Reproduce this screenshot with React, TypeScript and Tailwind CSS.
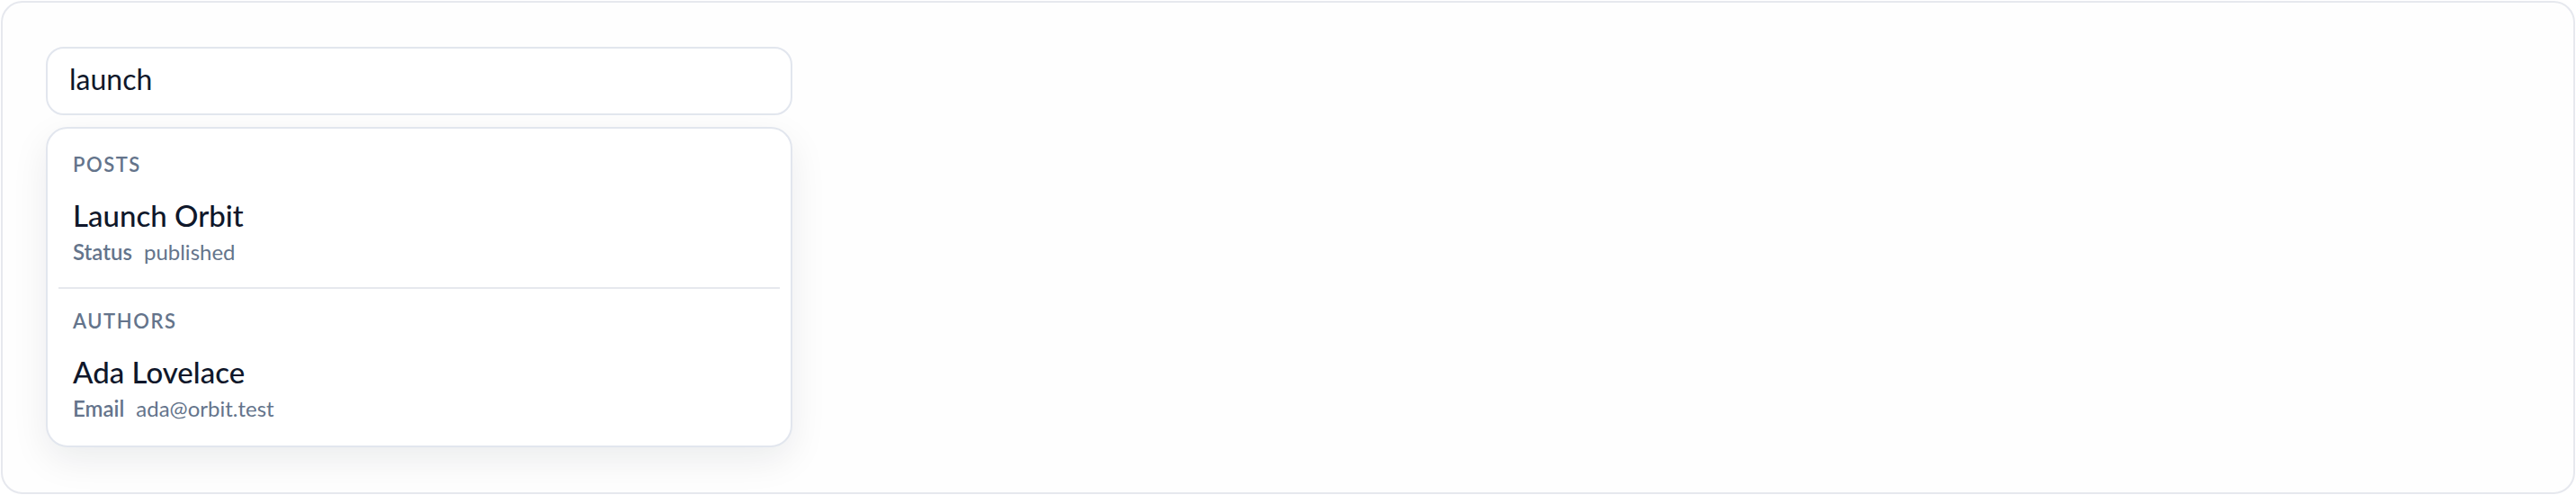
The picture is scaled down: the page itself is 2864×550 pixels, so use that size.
const font = { fontFamily: 'Lato, "Noto Sans", sans-serif' }

const groups = [
  { label: 'Posts', title: 'Launch Orbit', metaKey: 'Status', metaValue: 'published' },
  { label: 'Authors', title: 'Ada Lovelace', metaKey: 'Email', metaValue: 'ada@orbit.test' },
]

export default function App() {
  return (
    <div className="h-[550px] w-[2864px] bg-white p-px" style={font}>
      <div className="h-full rounded-[24px] border-2 border-[#e6e8ee] bg-[#fefefe] px-[48px] pt-[49px]">
        <div className="w-[830px]">
          <input
            readOnly
            value="launch"
            className="h-[76px] w-full rounded-[20px] border-2 border-[#e2e6ee] bg-white px-[24px] pb-[6px] text-[32px] text-[#0f172a] outline-none"
            style={font}
          />
          <div className="mt-[13px] rounded-[24px] border-2 border-[#e2e6ee] bg-white p-[12px] shadow-[0_14px_40px_rgba(15,23,42,0.08)]">
            {groups.map((g, i) => (
              <div
                key={g.label}
                className={
                  i === 0
                    ? 'px-[16px] pt-[12px] pb-[23px]'
                    : 'border-t-2 border-[#e6e8ee] px-[16px] pt-[20px] pb-[13px]'
                }
              >
                <p className="text-[22px] leading-[32px] font-semibold uppercase tracking-[0.07em] text-[#64748b]">
                  {g.label}
                </p>
                <p className="mt-[20px] text-[33px] leading-[40px] font-medium text-[#0f172a]">{g.title}</p>
                <p className="mt-[5px] flex gap-[13px] text-[24px] leading-[32px] text-[#64748b]">
                  <span className="font-semibold">{g.metaKey}</span>
                  <span>{g.metaValue}</span>
                </p>
              </div>
            ))}
          </div>
        </div>
      </div>
    </div>
  )
}
